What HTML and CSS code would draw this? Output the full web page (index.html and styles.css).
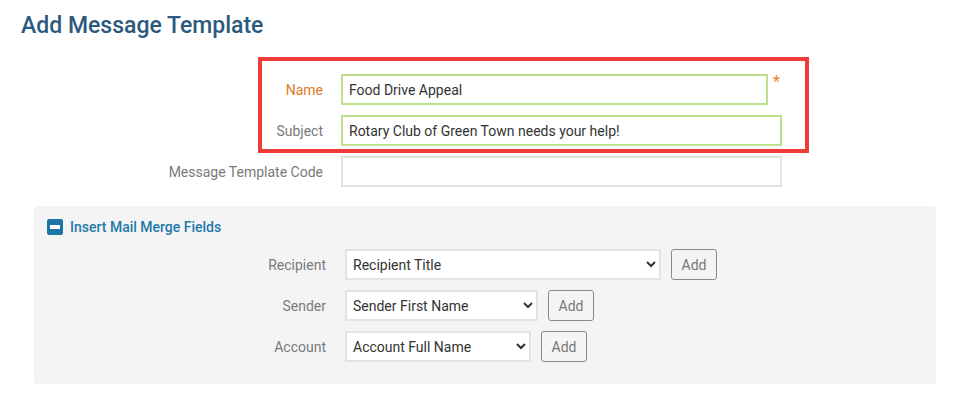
FILE: index.html
```html
<!DOCTYPE html>
<html lang="en">
  <head>
    <meta charset="UTF-8" />
    <meta name="viewport" content="width=device-width, initial-scale=1.0" />
    <title>Add Message Template</title>
    <link rel="stylesheet" href="styles.css">
  </head>
  <body>
    <div class="page">
      <h1 class="page-title">Add Message Template</h1>

      <div class="form">
        <div class="form-row">
          <label class="form-label required">Name</label>
          <div class="field">
            <input class="text-input valid name-input" type="text" value="Food Drive Appeal" />
            <span class="req-mark">*</span>
          </div>
        </div>
        <div class="form-row">
          <label class="form-label">Subject</label>
          <div class="field">
            <input class="text-input valid" type="text" value="Rotary Club of Green Town needs your help!" />
          </div>
        </div>
        <div class="form-row">
          <label class="form-label">Message Template Code</label>
          <div class="field">
            <input class="text-input" type="text" value="" />
          </div>
        </div>
      </div>

      <div class="merge-panel">
        <div class="merge-head">
          <span class="toggle-icon"></span>
          Insert Mail Merge Fields
        </div>

        <div class="merge-row">
          <label class="form-label">Recipient</label>
          <div class="field">
            <select class="merge-select recipient">
              <option>Recipient Title</option>
            </select>
            <button class="add-btn">Add</button>
          </div>
        </div>
        <div class="merge-row">
          <label class="form-label">Sender</label>
          <div class="field">
            <select class="merge-select sender">
              <option>Sender First Name</option>
            </select>
            <button class="add-btn">Add</button>
          </div>
        </div>
        <div class="merge-row">
          <label class="form-label">Account</label>
          <div class="field">
            <select class="merge-select account">
              <option>Account Full Name</option>
            </select>
            <button class="add-btn">Add</button>
          </div>
        </div>
      </div>
    </div>

    <!-- annotation box drawn over the name/subject rows -->
    <div class="highlight"></div>
  </body>
</html>
```

FILE: styles.css
```css
body {
  margin: 0;
  background: #fff;
  font-family: Roboto, "Liberation Sans", sans-serif;
  font-size: 14px;
  color: #333;
}

.page {
  padding: 12px 0 0 21px;
  width: 915px;
}

.page-title {
  margin: 0;
  font-size: 23px;
  line-height: 28px;
  font-weight: 500;
  color: #2c5a7e;
}

.form {
  display: flex;
  flex-direction: column;
  gap: 10px;
  margin-top: 34px;
}

.form-row {
  display: grid;
  grid-template-columns: 302px auto;
  column-gap: 18px;
  align-items: center;
}

.form-label {
  text-align: right;
  color: #7a7a7a;
}

.form-label.required {
  color: #e07a28;
}

.field {
  display: flex;
  align-items: flex-start;
  gap: 10px;
}

.text-input {
  box-sizing: border-box;
  width: 441px;
  height: 31px;
  padding: 0 6px;
  border: 2px solid #e2e2e2;
  font-family: inherit;
  font-size: 14px;
  color: #333;
  outline: none;
}

.text-input.valid {
  border-color: #bde08c;
}

.text-input.name-input {
  width: 427px;
}

.req-mark {
  margin-left: -5px;
  margin-top: -2px;
  color: #e8872c;
  font-size: 16px;
}

.merge-panel {
  margin: 19px 0 0 13px;
  padding: 13px 13px 22px;
  background: #f4f4f4;
  border-radius: 3px;
}

.merge-head {
  display: flex;
  align-items: center;
  gap: 7px;
  height: 16px;
  font-weight: 500;
  color: #1f79a9;
}

.toggle-icon {
  position: relative;
  width: 16px;
  height: 16px;
  border-radius: 2px;
  background: #1b76a7;
}

.toggle-icon::after {
  content: "";
  position: absolute;
  left: 3px;
  right: 3px;
  top: 6px;
  height: 4px;
  background: #fff;
}

.merge-row {
  display: grid;
  grid-template-columns: 279px auto;
  column-gap: 19px;
  align-items: center;
  margin-top: 10px;
}

.merge-head + .merge-row {
  margin-top: 14px;
}

.merge-select {
  box-sizing: border-box;
  height: 31px;
  padding: 0 2px;
  border: 2px solid #e3e3e3;
  border-radius: 0;
  background: #fff;
  font-family: inherit;
  font-size: 14px;
  color: #333;
  outline: none;
}

.merge-select.recipient {
  width: 316px;
}

.merge-select.sender {
  width: 193px;
}

.merge-select.account {
  width: 186px;
}

.add-btn {
  box-sizing: border-box;
  width: 46px;
  height: 31px;
  padding: 0;
  border: 1px solid #8a8a8a;
  border-radius: 3px;
  background: #f4f4f4;
  font-family: inherit;
  font-size: 14px;
  color: #777;
}

.highlight {
  position: absolute;
  left: 258px;
  top: 57px;
  width: 551px;
  height: 96px;
  box-sizing: border-box;
  border: 4px solid #f03b3b;
}
```
